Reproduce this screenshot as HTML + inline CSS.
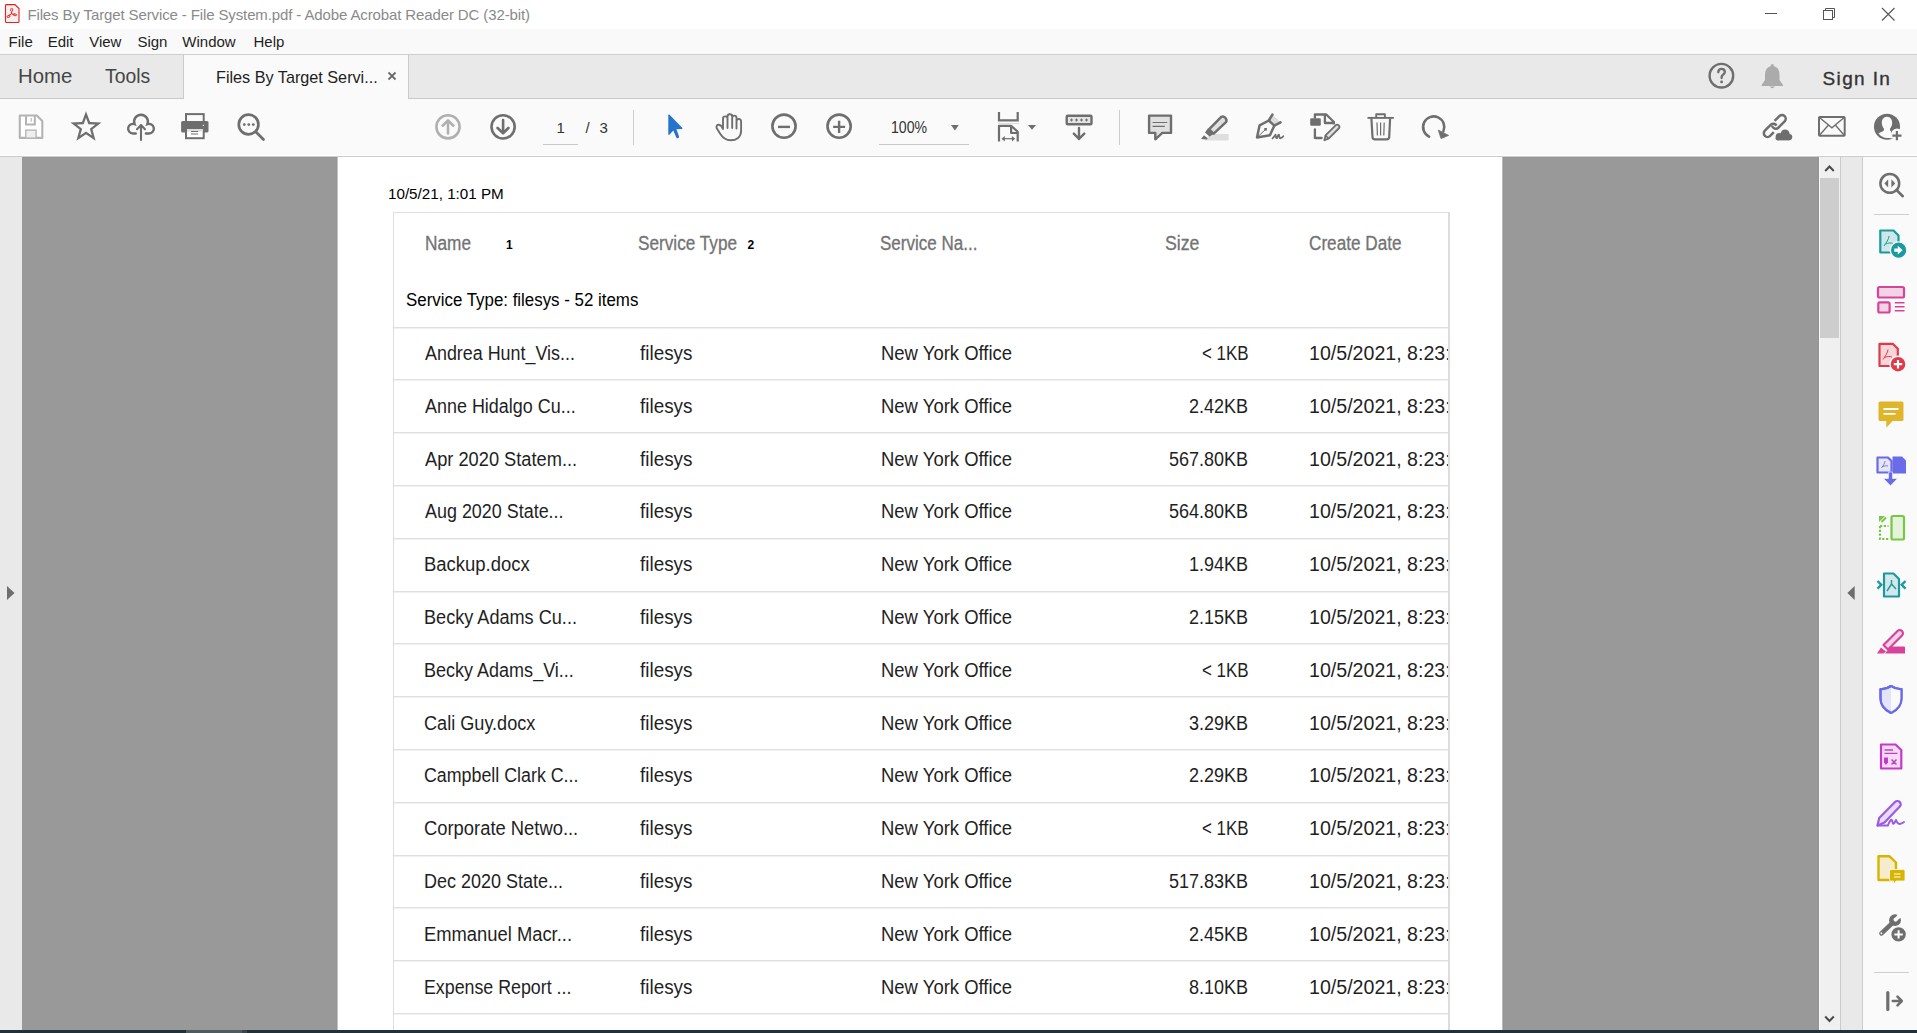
<!DOCTYPE html>
<html><head><meta charset="utf-8"><title>Acrobat</title>
<style>
html,body{margin:0;padding:0;width:1917px;height:1033px;overflow:hidden;background:#fff;}
body{position:relative;font-family:"Liberation Sans", sans-serif;}
.t{position:absolute;white-space:nowrap;}
.r{position:absolute;}
.i{position:absolute;overflow:visible;}
</style></head><body>
<div class="r" style="left:0px;top:0px;width:1917px;height:29px;background:#ffffff;"></div>
<div class="r" style="left:0px;top:29px;width:1917px;height:25px;background:#f9f9f9;"></div>
<div class="r" style="left:0px;top:54px;width:1917px;height:1px;background:#cfcfcf;"></div>
<div class="r" style="left:0px;top:55px;width:1917px;height:43px;background:#e9e9e9;"></div>
<div class="r" style="left:0px;top:98px;width:1917px;height:1px;background:#c9c9c9;"></div>
<div class="r" style="left:0px;top:99px;width:1917px;height:57px;background:#fafafa;"></div>
<div class="r" style="left:0px;top:155px;width:1917px;height:1px;background:#ffffff;"></div>
<div class="r" style="left:0px;top:156px;width:1917px;height:1px;background:#cdcdcd;"></div>
<div class="r" style="left:183px;top:55px;width:226px;height:44px;background:#fafafa;border-left:1px solid #c9c9c9;border-right:1px solid #c9c9c9;box-sizing:border-box;"></div>
<div class="r" style="left:0px;top:157px;width:22px;height:873px;background:#e9e9e9;"></div>
<div class="r" style="left:22px;top:157px;width:1797px;height:873px;background:#999999;"></div>
<div class="r" style="left:336px;top:157px;width:1px;height:873px;background:#959595;"></div>
<div class="r" style="left:337px;top:157px;width:1165px;height:873px;background:#ffffff;"></div>
<div class="r" style="left:337px;top:157px;width:1px;height:873px;background:#c6c6c6;"></div>
<div class="r" style="left:1502px;top:157px;width:1px;height:873px;background:#bdbdbd;"></div>
<div class="r" style="left:1503px;top:157px;width:1px;height:873px;background:#959595;"></div>
<div class="r" style="left:1818px;top:157px;width:1px;height:873px;background:#939393;"></div>
<div class="r" style="left:1819px;top:157px;width:1px;height:873px;background:#fafafa;"></div>
<div class="r" style="left:1820px;top:157px;width:20px;height:873px;background:#f0f0f0;"></div>
<div class="r" style="left:1820px;top:178px;width:19px;height:160px;background:#cdcdcd;"></div>
<div class="r" style="left:1840px;top:157px;width:1px;height:873px;background:#cbcbcb;"></div>
<div class="r" style="left:1841px;top:157px;width:21px;height:873px;background:#e9e9e9;"></div>
<div class="r" style="left:1862px;top:157px;width:1px;height:873px;background:#cbcbcb;"></div>
<div class="r" style="left:1863px;top:157px;width:54px;height:873px;background:#fafafa;"></div>
<div class="r" style="left:0px;top:1030px;width:1917px;height:3px;background:#1d3136;"></div>
<div class="r" style="left:186px;top:1030px;width:56px;height:3px;background:#4b5b5f;"></div>
<div class="r" style="left:242px;top:1030px;width:5px;height:3px;background:#3b4649;"></div>
<div class="t " style="left:27.40px;top:7.30px;font-size:15px;line-height:15px;color:#8a8a8a;letter-spacing:-0.12px;font-weight:normal;">Files By Target Service - File System.pdf - Adobe Acrobat Reader DC (32-bit)</div>
<div class="t " style="left:8.60px;top:33.90px;font-size:15px;line-height:15px;color:#1e1e1e;letter-spacing:0px;font-weight:normal;">File</div>
<div class="t " style="left:47.70px;top:33.90px;font-size:15px;line-height:15px;color:#1e1e1e;letter-spacing:0px;font-weight:normal;">Edit</div>
<div class="t " style="left:89.20px;top:33.90px;font-size:15px;line-height:15px;color:#1e1e1e;letter-spacing:0px;font-weight:normal;">View</div>
<div class="t " style="left:137.40px;top:33.90px;font-size:15px;line-height:15px;color:#1e1e1e;letter-spacing:0px;font-weight:normal;">Sign</div>
<div class="t " style="left:182.30px;top:33.90px;font-size:15px;line-height:15px;color:#1e1e1e;letter-spacing:0px;font-weight:normal;">Window</div>
<div class="t " style="left:253.50px;top:33.90px;font-size:15px;line-height:15px;color:#1e1e1e;letter-spacing:0px;font-weight:normal;">Help</div>
<div class="t " style="left:17.76px;top:66.69px;font-size:19.5px;line-height:19.5px;color:#454545;letter-spacing:0px;font-weight:normal;transform:scaleX(1.0440);transform-origin:0 0;">Home</div>
<div class="t " style="left:105.40px;top:66.69px;font-size:19.5px;line-height:19.5px;color:#454545;letter-spacing:0px;font-weight:normal;transform:scaleX(0.9911);transform-origin:0 0;">Tools</div>
<div class="t " style="left:215.75px;top:69.21px;font-size:17px;line-height:17px;color:#1e1e1e;letter-spacing:0px;font-weight:normal;transform:scaleX(0.9527);transform-origin:0 0;">Files By Target Servi...</div>
<div class="t " style="left:1822.60px;top:68.52px;font-size:19px;line-height:19px;color:#333333;letter-spacing:1.35px;font-weight:normal;-webkit-text-stroke:0.35px #333;">Sign In</div>
<div class="t " style="left:556.50px;top:120.00px;font-size:15px;line-height:15px;color:#333333;letter-spacing:0px;font-weight:normal;">1</div>
<div class="t " style="left:585.50px;top:120.00px;font-size:15px;line-height:15px;color:#333333;letter-spacing:0px;font-weight:normal;">/</div>
<div class="t " style="left:599.50px;top:120.00px;font-size:15px;line-height:15px;color:#333333;letter-spacing:0px;font-weight:normal;">3</div>
<div class="t " style="left:890.82px;top:119.66px;font-size:16px;line-height:16px;color:#333333;letter-spacing:0px;font-weight:normal;transform:scaleX(0.8825);transform-origin:0 0;">100%</div>
<div class="t " style="left:388.32px;top:186.28px;font-size:15.5px;line-height:15.5px;color:#000;letter-spacing:0px;font-weight:normal;transform:scaleX(0.9802);transform-origin:0 0;">10/5/21, 1:01 PM</div>
<div class="r" style="left:393px;top:212px;width:1057px;height:1px;background:#dedede;"></div>
<div class="r" style="left:393px;top:212px;width:1px;height:818px;background:#dedede;"></div>
<div class="r" style="left:1448px;top:212px;width:2px;height:818px;background:#dcdcdc;"></div>
<div class="t " style="left:425.02px;top:234.49px;font-size:19.5px;line-height:19.5px;color:#737373;letter-spacing:0px;font-weight:normal;transform:scaleX(0.8840);transform-origin:0 0;-webkit-text-stroke:0.3px #737373;">Name</div>
<div class="t " style="left:506.00px;top:238.64px;font-size:12px;line-height:12px;color:#000;letter-spacing:0px;font-weight:bold;">1</div>
<div class="t " style="left:638.12px;top:234.39px;font-size:19.5px;line-height:19.5px;color:#737373;letter-spacing:0px;font-weight:normal;transform:scaleX(0.8811);transform-origin:0 0;-webkit-text-stroke:0.3px #737373;">Service Type</div>
<div class="t " style="left:747.40px;top:238.74px;font-size:12px;line-height:12px;color:#000;letter-spacing:0px;font-weight:bold;">2</div>
<div class="t " style="left:880.43px;top:234.39px;font-size:19.5px;line-height:19.5px;color:#737373;letter-spacing:0px;font-weight:normal;transform:scaleX(0.8734);transform-origin:0 0;-webkit-text-stroke:0.3px #737373;">Service Na...</div>
<div class="t " style="left:1165.39px;top:234.39px;font-size:19.5px;line-height:19.5px;color:#737373;letter-spacing:0px;font-weight:normal;transform:scaleX(0.9083);transform-origin:0 0;-webkit-text-stroke:0.3px #737373;">Size</div>
<div class="t " style="left:1308.52px;top:234.39px;font-size:19.5px;line-height:19.5px;color:#737373;letter-spacing:0px;font-weight:normal;transform:scaleX(0.8796);transform-origin:0 0;-webkit-text-stroke:0.3px #737373;">Create Date</div>
<div class="t " style="left:405.54px;top:291.79px;font-size:17.5px;line-height:17.5px;color:#000;letter-spacing:0px;font-weight:normal;transform:scaleX(0.9646);transform-origin:0 0;">Service Type: filesys - 52 items</div>
<div class="r" style="left:394px;top:327px;width:1054px;height:1px;background:#e0e0e0;"></div>
<div class="r" style="left:394px;top:328px;width:1054px;height:1px;background:#f1f1f1;"></div>
<div class="r" style="left:394px;top:379px;width:1054px;height:1px;background:#e0e0e0;"></div>
<div class="r" style="left:394px;top:380px;width:1054px;height:1px;background:#f1f1f1;"></div>
<div class="r" style="left:394px;top:432px;width:1054px;height:1px;background:#e0e0e0;"></div>
<div class="r" style="left:394px;top:433px;width:1054px;height:1px;background:#f1f1f1;"></div>
<div class="r" style="left:394px;top:485px;width:1054px;height:1px;background:#e0e0e0;"></div>
<div class="r" style="left:394px;top:486px;width:1054px;height:1px;background:#f1f1f1;"></div>
<div class="r" style="left:394px;top:538px;width:1054px;height:1px;background:#e0e0e0;"></div>
<div class="r" style="left:394px;top:539px;width:1054px;height:1px;background:#f1f1f1;"></div>
<div class="r" style="left:394px;top:591px;width:1054px;height:1px;background:#e0e0e0;"></div>
<div class="r" style="left:394px;top:592px;width:1054px;height:1px;background:#f1f1f1;"></div>
<div class="r" style="left:394px;top:643px;width:1054px;height:1px;background:#e0e0e0;"></div>
<div class="r" style="left:394px;top:644px;width:1054px;height:1px;background:#f1f1f1;"></div>
<div class="r" style="left:394px;top:696px;width:1054px;height:1px;background:#e0e0e0;"></div>
<div class="r" style="left:394px;top:697px;width:1054px;height:1px;background:#f1f1f1;"></div>
<div class="r" style="left:394px;top:749px;width:1054px;height:1px;background:#e0e0e0;"></div>
<div class="r" style="left:394px;top:750px;width:1054px;height:1px;background:#f1f1f1;"></div>
<div class="r" style="left:394px;top:802px;width:1054px;height:1px;background:#e0e0e0;"></div>
<div class="r" style="left:394px;top:803px;width:1054px;height:1px;background:#f1f1f1;"></div>
<div class="r" style="left:394px;top:855px;width:1054px;height:1px;background:#e0e0e0;"></div>
<div class="r" style="left:394px;top:856px;width:1054px;height:1px;background:#f1f1f1;"></div>
<div class="r" style="left:394px;top:907px;width:1054px;height:1px;background:#e0e0e0;"></div>
<div class="r" style="left:394px;top:908px;width:1054px;height:1px;background:#f1f1f1;"></div>
<div class="r" style="left:394px;top:960px;width:1054px;height:1px;background:#e0e0e0;"></div>
<div class="r" style="left:394px;top:961px;width:1054px;height:1px;background:#f1f1f1;"></div>
<div class="r" style="left:394px;top:1013px;width:1054px;height:1px;background:#e0e0e0;"></div>
<div class="r" style="left:394px;top:1014px;width:1054px;height:1px;background:#f1f1f1;"></div>
<div class="t " style="left:424.70px;top:344.09px;font-size:19.5px;line-height:19.5px;color:#1f1f1f;letter-spacing:0px;font-weight:normal;transform:scaleX(0.9179);transform-origin:0 0;">Andrea Hunt_Vis...</div>
<div class="t " style="left:639.50px;top:344.09px;font-size:19.5px;line-height:19.5px;color:#1f1f1f;letter-spacing:0px;font-weight:normal;transform:scaleX(0.9679);transform-origin:0 0;">filesys</div>
<div class="t " style="left:881.15px;top:344.09px;font-size:19.5px;line-height:19.5px;color:#1f1f1f;letter-spacing:0px;font-weight:normal;transform:scaleX(0.9474);transform-origin:0 0;">New York Office</div>
<div class="t " style="left:1201.63px;top:344.09px;font-size:19.5px;line-height:19.5px;color:#1f1f1f;letter-spacing:0px;font-weight:normal;transform:scaleX(0.8698);transform-origin:0 0;">&lt; 1KB</div>
<div class="t" style="left:1309px;top:344.09px;width:139px;overflow:hidden;white-space:nowrap;"><div style="font-size:19.5px;line-height:19.5px;color:#1f1f1f;transform:scaleX(1.005);transform-origin:0 0;">10/5/2021, 8:23:02 AM</div></div>
<div class="t " style="left:424.70px;top:396.89px;font-size:19.5px;line-height:19.5px;color:#1f1f1f;letter-spacing:0px;font-weight:normal;transform:scaleX(0.9204);transform-origin:0 0;">Anne Hidalgo Cu...</div>
<div class="t " style="left:639.50px;top:396.89px;font-size:19.5px;line-height:19.5px;color:#1f1f1f;letter-spacing:0px;font-weight:normal;transform:scaleX(0.9679);transform-origin:0 0;">filesys</div>
<div class="t " style="left:881.15px;top:396.89px;font-size:19.5px;line-height:19.5px;color:#1f1f1f;letter-spacing:0px;font-weight:normal;transform:scaleX(0.9474);transform-origin:0 0;">New York Office</div>
<div class="t " style="left:1189.48px;top:396.89px;font-size:19.5px;line-height:19.5px;color:#1f1f1f;letter-spacing:0px;font-weight:normal;transform:scaleX(0.9238);transform-origin:0 0;">2.42KB</div>
<div class="t" style="left:1309px;top:396.89px;width:139px;overflow:hidden;white-space:nowrap;"><div style="font-size:19.5px;line-height:19.5px;color:#1f1f1f;transform:scaleX(1.005);transform-origin:0 0;">10/5/2021, 8:23:02 AM</div></div>
<div class="t " style="left:424.70px;top:449.69px;font-size:19.5px;line-height:19.5px;color:#1f1f1f;letter-spacing:0px;font-weight:normal;transform:scaleX(0.9354);transform-origin:0 0;">Apr 2020 Statem...</div>
<div class="t " style="left:639.50px;top:449.69px;font-size:19.5px;line-height:19.5px;color:#1f1f1f;letter-spacing:0px;font-weight:normal;transform:scaleX(0.9679);transform-origin:0 0;">filesys</div>
<div class="t " style="left:881.15px;top:449.69px;font-size:19.5px;line-height:19.5px;color:#1f1f1f;letter-spacing:0px;font-weight:normal;transform:scaleX(0.9474);transform-origin:0 0;">New York Office</div>
<div class="t " style="left:1169.28px;top:449.69px;font-size:19.5px;line-height:19.5px;color:#1f1f1f;letter-spacing:0px;font-weight:normal;transform:scaleX(0.9224);transform-origin:0 0;">567.80KB</div>
<div class="t" style="left:1309px;top:449.69px;width:139px;overflow:hidden;white-space:nowrap;"><div style="font-size:19.5px;line-height:19.5px;color:#1f1f1f;transform:scaleX(1.005);transform-origin:0 0;">10/5/2021, 8:23:02 AM</div></div>
<div class="t " style="left:424.70px;top:502.49px;font-size:19.5px;line-height:19.5px;color:#1f1f1f;letter-spacing:0px;font-weight:normal;transform:scaleX(0.9195);transform-origin:0 0;">Aug 2020 State...</div>
<div class="t " style="left:639.50px;top:502.49px;font-size:19.5px;line-height:19.5px;color:#1f1f1f;letter-spacing:0px;font-weight:normal;transform:scaleX(0.9679);transform-origin:0 0;">filesys</div>
<div class="t " style="left:881.15px;top:502.49px;font-size:19.5px;line-height:19.5px;color:#1f1f1f;letter-spacing:0px;font-weight:normal;transform:scaleX(0.9474);transform-origin:0 0;">New York Office</div>
<div class="t " style="left:1169.28px;top:502.49px;font-size:19.5px;line-height:19.5px;color:#1f1f1f;letter-spacing:0px;font-weight:normal;transform:scaleX(0.9224);transform-origin:0 0;">564.80KB</div>
<div class="t" style="left:1309px;top:502.49px;width:139px;overflow:hidden;white-space:nowrap;"><div style="font-size:19.5px;line-height:19.5px;color:#1f1f1f;transform:scaleX(1.005);transform-origin:0 0;">10/5/2021, 8:23:02 AM</div></div>
<div class="t " style="left:423.75px;top:555.29px;font-size:19.5px;line-height:19.5px;color:#1f1f1f;letter-spacing:0px;font-weight:normal;transform:scaleX(0.9468);transform-origin:0 0;">Backup.docx</div>
<div class="t " style="left:639.50px;top:555.29px;font-size:19.5px;line-height:19.5px;color:#1f1f1f;letter-spacing:0px;font-weight:normal;transform:scaleX(0.9679);transform-origin:0 0;">filesys</div>
<div class="t " style="left:881.15px;top:555.29px;font-size:19.5px;line-height:19.5px;color:#1f1f1f;letter-spacing:0px;font-weight:normal;transform:scaleX(0.9474);transform-origin:0 0;">New York Office</div>
<div class="t " style="left:1189.48px;top:555.29px;font-size:19.5px;line-height:19.5px;color:#1f1f1f;letter-spacing:0px;font-weight:normal;transform:scaleX(0.9238);transform-origin:0 0;">1.94KB</div>
<div class="t" style="left:1309px;top:555.29px;width:139px;overflow:hidden;white-space:nowrap;"><div style="font-size:19.5px;line-height:19.5px;color:#1f1f1f;transform:scaleX(1.005);transform-origin:0 0;">10/5/2021, 8:23:02 AM</div></div>
<div class="t " style="left:423.77px;top:608.09px;font-size:19.5px;line-height:19.5px;color:#1f1f1f;letter-spacing:0px;font-weight:normal;transform:scaleX(0.9284);transform-origin:0 0;">Becky Adams Cu...</div>
<div class="t " style="left:639.50px;top:608.09px;font-size:19.5px;line-height:19.5px;color:#1f1f1f;letter-spacing:0px;font-weight:normal;transform:scaleX(0.9679);transform-origin:0 0;">filesys</div>
<div class="t " style="left:881.15px;top:608.09px;font-size:19.5px;line-height:19.5px;color:#1f1f1f;letter-spacing:0px;font-weight:normal;transform:scaleX(0.9474);transform-origin:0 0;">New York Office</div>
<div class="t " style="left:1189.48px;top:608.09px;font-size:19.5px;line-height:19.5px;color:#1f1f1f;letter-spacing:0px;font-weight:normal;transform:scaleX(0.9238);transform-origin:0 0;">2.15KB</div>
<div class="t" style="left:1309px;top:608.09px;width:139px;overflow:hidden;white-space:nowrap;"><div style="font-size:19.5px;line-height:19.5px;color:#1f1f1f;transform:scaleX(1.005);transform-origin:0 0;">10/5/2021, 8:23:02 AM</div></div>
<div class="t " style="left:423.78px;top:660.89px;font-size:19.5px;line-height:19.5px;color:#1f1f1f;letter-spacing:0px;font-weight:normal;transform:scaleX(0.9238);transform-origin:0 0;">Becky Adams_Vi...</div>
<div class="t " style="left:639.50px;top:660.89px;font-size:19.5px;line-height:19.5px;color:#1f1f1f;letter-spacing:0px;font-weight:normal;transform:scaleX(0.9679);transform-origin:0 0;">filesys</div>
<div class="t " style="left:881.15px;top:660.89px;font-size:19.5px;line-height:19.5px;color:#1f1f1f;letter-spacing:0px;font-weight:normal;transform:scaleX(0.9474);transform-origin:0 0;">New York Office</div>
<div class="t " style="left:1201.63px;top:660.89px;font-size:19.5px;line-height:19.5px;color:#1f1f1f;letter-spacing:0px;font-weight:normal;transform:scaleX(0.8698);transform-origin:0 0;">&lt; 1KB</div>
<div class="t" style="left:1309px;top:660.89px;width:139px;overflow:hidden;white-space:nowrap;"><div style="font-size:19.5px;line-height:19.5px;color:#1f1f1f;transform:scaleX(1.005);transform-origin:0 0;">10/5/2021, 8:23:02 AM</div></div>
<div class="t " style="left:423.77px;top:713.69px;font-size:19.5px;line-height:19.5px;color:#1f1f1f;letter-spacing:0px;font-weight:normal;transform:scaleX(0.9286);transform-origin:0 0;">Cali Guy.docx</div>
<div class="t " style="left:639.50px;top:713.69px;font-size:19.5px;line-height:19.5px;color:#1f1f1f;letter-spacing:0px;font-weight:normal;transform:scaleX(0.9679);transform-origin:0 0;">filesys</div>
<div class="t " style="left:881.15px;top:713.69px;font-size:19.5px;line-height:19.5px;color:#1f1f1f;letter-spacing:0px;font-weight:normal;transform:scaleX(0.9474);transform-origin:0 0;">New York Office</div>
<div class="t " style="left:1189.48px;top:713.69px;font-size:19.5px;line-height:19.5px;color:#1f1f1f;letter-spacing:0px;font-weight:normal;transform:scaleX(0.9238);transform-origin:0 0;">3.29KB</div>
<div class="t" style="left:1309px;top:713.69px;width:139px;overflow:hidden;white-space:nowrap;"><div style="font-size:19.5px;line-height:19.5px;color:#1f1f1f;transform:scaleX(1.005);transform-origin:0 0;">10/5/2021, 8:23:02 AM</div></div>
<div class="t " style="left:423.79px;top:766.49px;font-size:19.5px;line-height:19.5px;color:#1f1f1f;letter-spacing:0px;font-weight:normal;transform:scaleX(0.9138);transform-origin:0 0;">Campbell Clark C...</div>
<div class="t " style="left:639.50px;top:766.49px;font-size:19.5px;line-height:19.5px;color:#1f1f1f;letter-spacing:0px;font-weight:normal;transform:scaleX(0.9679);transform-origin:0 0;">filesys</div>
<div class="t " style="left:881.15px;top:766.49px;font-size:19.5px;line-height:19.5px;color:#1f1f1f;letter-spacing:0px;font-weight:normal;transform:scaleX(0.9474);transform-origin:0 0;">New York Office</div>
<div class="t " style="left:1189.48px;top:766.49px;font-size:19.5px;line-height:19.5px;color:#1f1f1f;letter-spacing:0px;font-weight:normal;transform:scaleX(0.9238);transform-origin:0 0;">2.29KB</div>
<div class="t" style="left:1309px;top:766.49px;width:139px;overflow:hidden;white-space:nowrap;"><div style="font-size:19.5px;line-height:19.5px;color:#1f1f1f;transform:scaleX(1.005);transform-origin:0 0;">10/5/2021, 8:23:02 AM</div></div>
<div class="t " style="left:423.76px;top:819.29px;font-size:19.5px;line-height:19.5px;color:#1f1f1f;letter-spacing:0px;font-weight:normal;transform:scaleX(0.9422);transform-origin:0 0;">Corporate Netwo...</div>
<div class="t " style="left:639.50px;top:819.29px;font-size:19.5px;line-height:19.5px;color:#1f1f1f;letter-spacing:0px;font-weight:normal;transform:scaleX(0.9679);transform-origin:0 0;">filesys</div>
<div class="t " style="left:881.15px;top:819.29px;font-size:19.5px;line-height:19.5px;color:#1f1f1f;letter-spacing:0px;font-weight:normal;transform:scaleX(0.9474);transform-origin:0 0;">New York Office</div>
<div class="t " style="left:1201.63px;top:819.29px;font-size:19.5px;line-height:19.5px;color:#1f1f1f;letter-spacing:0px;font-weight:normal;transform:scaleX(0.8698);transform-origin:0 0;">&lt; 1KB</div>
<div class="t" style="left:1309px;top:819.29px;width:139px;overflow:hidden;white-space:nowrap;"><div style="font-size:19.5px;line-height:19.5px;color:#1f1f1f;transform:scaleX(1.005);transform-origin:0 0;">10/5/2021, 8:23:02 AM</div></div>
<div class="t " style="left:423.78px;top:872.09px;font-size:19.5px;line-height:19.5px;color:#1f1f1f;letter-spacing:0px;font-weight:normal;transform:scaleX(0.9230);transform-origin:0 0;">Dec 2020 State...</div>
<div class="t " style="left:639.50px;top:872.09px;font-size:19.5px;line-height:19.5px;color:#1f1f1f;letter-spacing:0px;font-weight:normal;transform:scaleX(0.9679);transform-origin:0 0;">filesys</div>
<div class="t " style="left:881.15px;top:872.09px;font-size:19.5px;line-height:19.5px;color:#1f1f1f;letter-spacing:0px;font-weight:normal;transform:scaleX(0.9474);transform-origin:0 0;">New York Office</div>
<div class="t " style="left:1169.28px;top:872.09px;font-size:19.5px;line-height:19.5px;color:#1f1f1f;letter-spacing:0px;font-weight:normal;transform:scaleX(0.9224);transform-origin:0 0;">517.83KB</div>
<div class="t" style="left:1309px;top:872.09px;width:139px;overflow:hidden;white-space:nowrap;"><div style="font-size:19.5px;line-height:19.5px;color:#1f1f1f;transform:scaleX(1.005);transform-origin:0 0;">10/5/2021, 8:23:02 AM</div></div>
<div class="t " style="left:423.76px;top:924.89px;font-size:19.5px;line-height:19.5px;color:#1f1f1f;letter-spacing:0px;font-weight:normal;transform:scaleX(0.9419);transform-origin:0 0;">Emmanuel Macr...</div>
<div class="t " style="left:639.50px;top:924.89px;font-size:19.5px;line-height:19.5px;color:#1f1f1f;letter-spacing:0px;font-weight:normal;transform:scaleX(0.9679);transform-origin:0 0;">filesys</div>
<div class="t " style="left:881.15px;top:924.89px;font-size:19.5px;line-height:19.5px;color:#1f1f1f;letter-spacing:0px;font-weight:normal;transform:scaleX(0.9474);transform-origin:0 0;">New York Office</div>
<div class="t " style="left:1189.48px;top:924.89px;font-size:19.5px;line-height:19.5px;color:#1f1f1f;letter-spacing:0px;font-weight:normal;transform:scaleX(0.9238);transform-origin:0 0;">2.45KB</div>
<div class="t" style="left:1309px;top:924.89px;width:139px;overflow:hidden;white-space:nowrap;"><div style="font-size:19.5px;line-height:19.5px;color:#1f1f1f;transform:scaleX(1.005);transform-origin:0 0;">10/5/2021, 8:23:02 AM</div></div>
<div class="t " style="left:423.79px;top:977.69px;font-size:19.5px;line-height:19.5px;color:#1f1f1f;letter-spacing:0px;font-weight:normal;transform:scaleX(0.9126);transform-origin:0 0;">Expense Report ...</div>
<div class="t " style="left:639.50px;top:977.69px;font-size:19.5px;line-height:19.5px;color:#1f1f1f;letter-spacing:0px;font-weight:normal;transform:scaleX(0.9679);transform-origin:0 0;">filesys</div>
<div class="t " style="left:881.15px;top:977.69px;font-size:19.5px;line-height:19.5px;color:#1f1f1f;letter-spacing:0px;font-weight:normal;transform:scaleX(0.9474);transform-origin:0 0;">New York Office</div>
<div class="t " style="left:1189.48px;top:977.69px;font-size:19.5px;line-height:19.5px;color:#1f1f1f;letter-spacing:0px;font-weight:normal;transform:scaleX(0.9238);transform-origin:0 0;">8.10KB</div>
<div class="t" style="left:1309px;top:977.69px;width:139px;overflow:hidden;white-space:nowrap;"><div style="font-size:19.5px;line-height:19.5px;color:#1f1f1f;transform:scaleX(1.005);transform-origin:0 0;">10/5/2021, 8:23:02 AM</div></div>
<svg class="i" style="left:0;top:0" width="1917" height="1033" viewBox="0 0 1917 1033"><path d="M5.5,4.6 H15 L19,8.6 V21.5 Q19,22.5 18,22.5 H6.5 Q5.5,22.5 5.5,21.5 V5.6 Q5.5,4.6 6.5,4.6 Z" fill="#f1f1f1" stroke="#f41a1a" stroke-width="1.1"/>
<ellipse cx="11.7" cy="9.9" rx="1.1" ry="1.6" fill="none" stroke="#f01c1c" stroke-width="0.9"/>
<path d="M11.7,11.5 L11.4,13.8 L8.2,15.8 M11.4,13.8 L14.6,14.4" fill="none" stroke="#f01c1c" stroke-width="1"/>
<ellipse cx="8.6" cy="16.4" rx="1.7" ry="0.9" transform="rotate(-20 8.6 16.4)" fill="none" stroke="#f01c1c" stroke-width="0.9"/>
<ellipse cx="14.9" cy="14.8" rx="1.8" ry="0.9" transform="rotate(8 14.9 14.8)" fill="none" stroke="#f01c1c" stroke-width="0.9"/>
<path d="M1765,13.5 H1777" stroke="#555" stroke-width="1"/>
<rect x="1823.5" y="10.5" width="9" height="9" fill="none" stroke="#555" stroke-width="1"/>
<path d="M1825.5,10.5 V8.5 H1834.5 V17.5 H1832.5" fill="none" stroke="#555" stroke-width="1"/>
<path d="M1882,8 L1894.5,20.5 M1894.5,8 L1882,20.5" stroke="#555" stroke-width="1.1"/>
<path d="M388.5,72.5 L395.5,79.5 M395.5,72.5 L388.5,79.5" stroke="#6a6a6a" stroke-width="1.8"/>
<circle cx="1721.4" cy="75.7" r="11.8" fill="none" stroke="#6e6e6e" stroke-width="2.4"/>
<path d="M1718.3,72.3 Q1718.3,68.9 1721.6,68.9 Q1724.8,68.9 1724.8,71.9 Q1724.8,73.7 1723,74.8 Q1721.6,75.7 1721.6,77.3 V78" fill="none" stroke="#6e6e6e" stroke-width="2.3" stroke-linecap="round"/>
<circle cx="1721.6" cy="81.9" r="1.45" fill="#6e6e6e"/>
<path d="M1772.3,64 Q1773.8,64 1773.8,66 Q1779.5,67.5 1779.5,75 V80 L1783,85 V86 H1761.6 V85 L1765,80 V75 Q1765,67.5 1770.8,66 Q1770.8,64 1772.3,64 Z" fill="#ababab"/>
<path d="M1769.5,86.5 Q1772.3,90 1775,86.5 Z" fill="#ababab"/>
<path d="M19.8,115.5 H36.8 L42.3,121 V137.9 H19.8 Z" fill="#ffffff" stroke="#b3b3b3" stroke-width="2.1" stroke-linejoin="round"/>
<path d="M26,115.5 V124.6 H34.8 V115.5" fill="none" stroke="#b3b3b3" stroke-width="2"/>
<path d="M31.2,118 V121.8" stroke="#b3b3b3" stroke-width="1.1"/>
<rect x="25.8" y="130.1" width="10.3" height="8" fill="#eeeeee" stroke="#b3b3b3" stroke-width="1.3"/>
<path d="M86.00,111.20 L90.00,122.00 L101.50,122.46 L92.47,129.60 L95.58,140.69 L86.00,134.30 L76.42,140.69 L79.53,129.60 L70.50,122.46 L82.00,122.00 Z M86.00,117.68 L88.41,124.19 L95.34,124.47 L89.90,128.77 L91.77,135.44 L86.00,131.60 L80.23,135.44 L82.10,128.77 L76.66,124.47 L83.59,124.19 Z" fill="#6e6e6e" fill-rule="evenodd"/>
<path d="M135.8,133.5 H133 A4.8,4.8 0 1 1 134.6,124.2 A6.9,6.9 0 1 1 147.4,124.2 A4.8,4.8 0 1 1 149,133.5 H145.9" fill="none" stroke="#6e6e6e" stroke-width="2.4" stroke-linecap="round"/>
<path d="M141,125 V140 M137,129.2 L141,125 L145,129.2" fill="none" stroke="#6e6e6e" stroke-width="2.1" stroke-linecap="round" stroke-linejoin="round"/>
<rect x="186" y="114.1" width="17.7" height="9" fill="#fafafa" stroke="#6e6e6e" stroke-width="2"/>
<rect x="181.1" y="121" width="27.4" height="11.6" rx="1.6" fill="#6e6e6e"/>
<rect x="186" y="128" width="17.7" height="10.2" fill="#ffffff" stroke="#6e6e6e" stroke-width="2"/>
<rect x="187" y="129" width="15.7" height="2.5" fill="#dedede"/>
<path d="M191,131.5 H198.2 M191,134 H198.2" stroke="#6e6e6e" stroke-width="1"/>
<path d="M202.6,126 L203.4,124.2 L204.2,126 Z" fill="#fff"/>
<circle cx="248.6" cy="124.5" r="9.8" fill="none" stroke="#6e6e6e" stroke-width="2.7"/>
<path d="M256,132 L263.5,139.5" stroke="#6e6e6e" stroke-width="2.8" stroke-linecap="round"/>
<circle cx="244.3" cy="124.6" r="1.4" fill="#6e6e6e"/>
<circle cx="248.8" cy="124.6" r="1.4" fill="#6e6e6e"/>
<circle cx="253.3" cy="124.6" r="1.4" fill="#6e6e6e"/>
<circle cx="448" cy="126.8" r="11.6" fill="none" stroke="#b0b0b0" stroke-width="2.6"/>
<path d="M448,133.5 V120.6 M442.6,125.7 L448,120.4 L453.4,125.7" fill="none" stroke="#b0b0b0" stroke-width="2.6" stroke-linecap="round" stroke-linejoin="round"/>
<circle cx="503.1" cy="126.85" r="11.6" fill="none" stroke="#6e6e6e" stroke-width="2.6"/>
<path d="M503.1,120.1 V133 M497.6,128 L503.1,133.2 L508.4,128" fill="none" stroke="#6e6e6e" stroke-width="2.6" stroke-linecap="round" stroke-linejoin="round"/>
<rect x="543" y="144" width="35" height="1" fill="#c8c8c8"/>
<rect x="633" y="110" width="1" height="35" fill="#cccccc"/>
<rect x="879" y="144" width="90" height="1" fill="#c8c8c8"/>
<rect x="1119" y="110" width="1" height="35" fill="#cccccc"/>
<path d="M668.3,115 Q668.3,114 669.3,114.6 L682.2,127.8 Q683,128.9 681.8,129 L676.4,129.3 L679,136.2 Q679.3,137.6 678,138.2 Q676.8,138.6 676.3,137.4 L673.3,130.6 L669.6,134.6 Q668.3,135.6 668.3,134.2 Z" fill="#2473cc"/>
<path d="M723,129 V118.65 A2.25,2.25 0 0 1 727.5,118.65 V128 M727.5,119 V116.65 A2.35,2.35 0 0 1 732.2,116.65 V128 M732.2,117.75 A2.15,2.15 0 0 1 736.5,117.75 V128.5 M736.5,121.3 A2.3,2.3 0 0 1 741.1,121.3 V131 C741.1,137 736.5,140.3 730.5,140.3 C725.5,140.3 722.5,137.5 720,133.5 L716.8,128.3 C715.8,126.3 717,124.6 719,124.8 C720.8,125 722,126.5 723,129" fill="none" stroke="#6e6e6e" stroke-width="1.9" stroke-linecap="round" stroke-linejoin="round"/>
<circle cx="784" cy="126.2" r="11.6" fill="none" stroke="#6e6e6e" stroke-width="2.6"/>
<path d="M778,126.9 H790" stroke="#6e6e6e" stroke-width="2.4"/>
<circle cx="839.1" cy="126.2" r="11.6" fill="none" stroke="#6e6e6e" stroke-width="2.6"/>
<path d="M833.1,126.9 H845.1 M839.1,120.8 V133" stroke="#6e6e6e" stroke-width="2.4"/>
<path d="M951,125 H958.8 L954.9,130.5 Z" fill="#6e6e6e"/>
<path d="M1028,124.9 H1036 L1032,129.7 Z" fill="#6e6e6e"/>
<path d="M999,112 V120.4 H1017.7 V112" fill="none" stroke="#6e6e6e" stroke-width="2.2"/>
<rect x="998" y="123" width="21" height="1" fill="#dddddd"/>
<path d="M999,141.6 V125.8 H1011.1 L1017.7,131.8 V141.6 M1011.1,125.8 V133 H1017.7" fill="none" stroke="#6e6e6e" stroke-width="2.2" stroke-linejoin="round"/>
<path d="M1004,138.7 H1012.5" stroke="#6e6e6e" stroke-width="1.2"/>
<path d="M1001.5,138.7 L1004.8,136 V141.4 Z M1015.2,138.7 L1011.9,136 V141.4 Z" fill="#6e6e6e"/>
<rect x="1066.7" y="115.8" width="24.8" height="8.5" rx="1" fill="#e4e4e4" stroke="#6e6e6e" stroke-width="2.4"/>
<path d="M1071.5,118.2 L1072.9,120 L1071.5,121.8 L1070.1,120 Z" fill="#6e6e6e"/>
<path d="M1076.5,118.2 L1077.9,120 L1076.5,121.8 L1075.1,120 Z" fill="#6e6e6e"/>
<path d="M1081.5,118.2 L1082.9,120 L1081.5,121.8 L1080.1,120 Z" fill="#6e6e6e"/>
<path d="M1086.5,118.2 L1087.9,120 L1086.5,121.8 L1085.1,120 Z" fill="#6e6e6e"/>
<path d="M1079,128 V139 M1073.8,133.6 L1079,138.9 L1084.3,133.6" fill="none" stroke="#6e6e6e" stroke-width="2.4" stroke-linecap="round" stroke-linejoin="round"/>
<path d="M1149.1,115.6 H1171 V132.9 H1162.3 L1155.3,139.3 V132.9 H1149.1 Z" fill="#e0e0e0" stroke="#6e6e6e" stroke-width="2.4" stroke-linejoin="round"/>
<path d="M1152.6,122.5 H1167.2 M1152.6,126.4 H1164.8" stroke="#6e6e6e" stroke-width="1.1"/>
<path d="M1210,134 H1228.7 V140.6 H1204.5 Z" fill="#dedede"/>
<path d="M1209,129.3 L1221.3,116.9 A3.8,3.8 0 0 1 1226.2,121.8 L1213.7,133.6 Z" fill="#e0e0e0" stroke="#6e6e6e" stroke-width="2.5" stroke-linejoin="round"/>
<path d="M1205,132.5 L1207.8,128.6 L1214,133.75 L1209.6,136.5 Z" fill="#6e6e6e"/>
<path d="M1201,139 L1204,135.2 L1207.8,138.4 L1206.5,139.6 Z" fill="#6e6e6e"/>
<path d="M1272.4,114.4 L1280.5,122.3 L1274.3,125.7 L1268.8,120.5 Z" fill="#dcdcdc"/>
<path d="M1257,137.4 L1259.6,125.3 L1268.8,120.5 L1274.3,125.7 L1269.9,135.2 Z" fill="none" stroke="#6e6e6e" stroke-width="2.5" stroke-linejoin="round"/>
<path d="M1268.8,120.5 L1272.4,114.6 M1274.3,125.7 L1280.5,122.3" stroke="#6e6e6e" stroke-width="2.6" stroke-linecap="round"/>
<path d="M1257.5,137 L1265.5,129.5" stroke="#6e6e6e" stroke-width="1"/>
<rect x="1264.3" y="128" width="2.6" height="2.6" fill="#6e6e6e"/>
<path d="M1272.5,138.3 Q1274.5,136.5 1275.5,134.6 Q1275.8,138.4 1277,138.2 Q1278.2,134.2 1279,134.8 Q1279.3,138.5 1280.6,138.2 Q1282,137.8 1283.3,136.2" fill="none" stroke="#6e6e6e" stroke-width="1.8" stroke-linejoin="round" stroke-linecap="round"/>
<path d="M1314.9,118.5 V114.5 H1326.3 L1333.9,122 V124.5 M1324.9,115 V123 H1333.9" fill="none" stroke="#6e6e6e" stroke-width="2.3" stroke-linejoin="round"/>
<rect x="1310.2" y="118.3" width="10.6" height="7.4" rx="1.3" fill="#6e6e6e"/>
<path d="M1314.9,129.5 V138 H1321.6" fill="none" stroke="#6e6e6e" stroke-width="2.3" stroke-linecap="round" stroke-linejoin="round"/>
<path d="M1324.4,140.2 L1325.5,135.3 L1335.6,125.4 A1.9,1.9 0 0 1 1338.7,128.5 L1328.6,138.6 Z" fill="#e0e0e0" stroke="#6e6e6e" stroke-width="1.8" stroke-linejoin="round"/>
<path d="M1325.5,135.3 L1328.6,138.6" stroke="#6e6e6e" stroke-width="1.5"/>
<path d="M1367.5,117.9 H1393.8" stroke="#6e6e6e" stroke-width="1.9"/>
<path d="M1376.2,117.5 V114.2 H1384.9 V117.5" fill="none" stroke="#6e6e6e" stroke-width="1.9" stroke-linejoin="round"/>
<path d="M1371.4,118.5 L1372.5,137 Q1372.6,139.3 1375,139.3 H1386.7 Q1389.1,139.3 1389.2,137 L1390.1,118.5" fill="none" stroke="#6e6e6e" stroke-width="2.2"/>
<path d="M1377,122.6 L1377.4,135.4 M1380.6,122.6 V135.4 M1384.2,122.6 L1383.8,135.4" stroke="#6e6e6e" stroke-width="1.2"/>
<path d="M1429.1,136.6 A10.6,10.6 0 1 1 1443.4,131.3" fill="none" stroke="#6e6e6e" stroke-width="2.6" stroke-linecap="round"/>
<path d="M1438.3,130.1 L1448.6,135.4 L1441,138.5 Z" fill="#6e6e6e" stroke="#6e6e6e" stroke-width="0.8" stroke-linejoin="round"/>
<path d="M1774.6,120.96 L1779.38,116.18 A3.7,3.7 0 0 1 1784.62,121.42 L1778.42,127.62 A3.7,3.7 0 0 1 1772.1,125.6" fill="none" stroke="#6e6e6e" stroke-width="2.5"/>
<path d="M1773.8,132.24 L1770.12,135.92 A3.7,3.7 0 0 1 1764.88,130.68 L1770.88,124.68 A3.7,3.7 0 0 1 1776.5,125.6" fill="none" stroke="#6e6e6e" stroke-width="2.5"/>
<circle cx="1785.1" cy="133.9" r="5.8" fill="#fafafa"/>
<circle cx="1779.2" cy="136.6" r="4.8" fill="#fafafa"/>
<circle cx="1789.2" cy="137.1" r="4.4" fill="#fafafa"/>
<circle cx="1777.6" cy="138.3" r="3.4000000000000004" fill="#fafafa"/>
<rect x="1775" y="136" width="18.5" height="5.8" fill="#fafafa"/>
<circle cx="1785.1" cy="133.9" r="4.5" fill="#6e6e6e"/>
<circle cx="1779.2" cy="136.6" r="3.5" fill="#6e6e6e"/>
<circle cx="1789.2" cy="137.1" r="3.1" fill="#6e6e6e"/>
<circle cx="1777.6" cy="138.3" r="2.1" fill="#6e6e6e"/>
<rect x="1777.6" y="137" width="11.6" height="3.4" fill="#6e6e6e"/>
<rect x="1819" y="117" width="25.7" height="18.7" rx="0.8" fill="none" stroke="#6e6e6e" stroke-width="2"/>
<path d="M1819.5,117.5 L1831.9,127.8 L1844.2,117.5 M1819.5,135.2 L1828.5,125 M1844.2,135.2 L1835.3,125" fill="none" stroke="#6e6e6e" stroke-width="1.4"/>
<circle cx="1887" cy="126.75" r="13.05" fill="#6e6e6e"/>
<path d="M1887,116.7 C1883.3,116.7 1881.8,119.8 1881.8,122.8 C1881.8,125.5 1883,127.5 1884,128.8 Q1884.5,130.7 1882.5,131.5 Q1879.5,132.5 1878.6,133.6 C1880.8,136.5 1884,138.1 1887,138.1 C1889,138.1 1891,137.8 1891.5,137.2 L1891,131.5 Q1889.5,130.5 1890,128.8 C1891,127.5 1892.2,125.5 1892.2,122.8 C1892.2,119.8 1890.7,116.7 1887,116.7 Z" fill="#fafafa"/>
<path d="M1889.5,138 L1892,131 Q1894,128.5 1897,128.5 Q1899.5,128.5 1901,130 L1903,140 Z" fill="#fafafa"/>
<path d="M1896.9,130.3 V140.9 M1891.6,135.6 H1902.2" stroke="#fafafa" stroke-width="4.4"/>
<path d="M1896.9,131 V140.2 M1892.3,135.6 H1901.5" stroke="#6e6e6e" stroke-width="2.2"/><path d="M7,586 L14.5,593 L7,600 Z" fill="#6e6e6e"/>
<path d="M1854.7,586 L1847.3,593 L1854.7,600 Z" fill="#6e6e6e"/>
<path d="M1825.2,171 L1829.5,166.5 L1833.8,171" fill="none" stroke="#4a4a4a" stroke-width="2"/>
<path d="M1825.2,1016.5 L1829.5,1021 L1833.8,1016.5" fill="none" stroke="#4a4a4a" stroke-width="2"/>
<circle cx="1889.8" cy="183.4" r="9.4" fill="none" stroke="#6e6e6e" stroke-width="2.5"/>
<path d="M1896.5,190 L1902.8,196.2" stroke="#6e6e6e" stroke-width="2.6" stroke-linecap="round"/>
<path d="M1888.2,179.3 V187.5 L1884.4,183.4 Z M1891.4,179.3 V187.5 L1895.2,183.4 Z" fill="#6e6e6e"/>
<rect x="1874" y="214" width="35" height="1" fill="#cfcfcf"/>
<path d="M1880.3,230.5 H1893.5 L1898.5,235.5 V252.5 H1880.3 Z" fill="#cfe7e9" stroke="#1a9aa0" stroke-width="2.2" stroke-linejoin="round"/>
<path d="M1884,246 C1886,243 1889,239 1889,236 M1885.5,244 C1888,243 1891,242.5 1893,243.5" fill="none" stroke="#1a9aa0" stroke-width="1"/>
<circle cx="1898.6" cy="250.2" r="8.3" fill="#1a9aa0" stroke="#fafafa" stroke-width="1.4"/>
<path d="M1894.3,248.6 H1897.8 V245.8 L1902.6,250.2 L1897.8,254.6 V251.8 H1894.3 Z" fill="#fff"/>
<rect x="1878" y="287" width="26" height="10.5" rx="1.5" fill="#f3d3e6" stroke="#d9429a" stroke-width="2.2"/>
<rect x="1878.3" y="302.3" width="11.3" height="10.2" rx="1.5" fill="#f3d3e6" stroke="#d9429a" stroke-width="2.2"/>
<path d="M1894.8,302.8 H1904.5 M1894.8,306.8 H1904.5 M1894.8,310.8 H1904.5" stroke="#d9429a" stroke-width="1.4"/>
<path d="M1879.5,343.8 H1892.8 L1897.8,348.8 V366 H1879.5 Z" fill="#f6d6d9" stroke="#e0394a" stroke-width="2.2" stroke-linejoin="round"/>
<path d="M1883,359.5 C1885,356.5 1888,352.5 1888,349.5 M1884.5,357.5 C1887,356.5 1890,356 1892,357" fill="none" stroke="#e0394a" stroke-width="1"/>
<circle cx="1898" cy="364.2" r="8" fill="#e0394a" stroke="#fafafa" stroke-width="1.4"/>
<path d="M1898,360 V368.4 M1893.8,364.2 H1902.2" stroke="#fff" stroke-width="2.2"/>
<path d="M1880.2,401.5 H1902 Q1903.5,401.5 1903.5,403 V419.5 Q1903.5,421 1902,421 H1892.5 L1886.3,427.8 V421 H1880.2 Q1878.5,421 1878.5,419.5 V403 Q1878.5,401.5 1880.2,401.5 Z" fill="#dfb52a"/>
<path d="M1883.5,409 H1898.5 M1883.5,413.8 H1895.5" stroke="#fff" stroke-width="1.8"/>
<path d="M1892.5,456.5 H1902 L1906,460.5 V473.5 H1892.5 Z" fill="#6a6be8"/>
<path d="M1877.5,457.5 H1888 L1891.5,461 V472.5 H1877.5 Z" fill="#e6e6fb" stroke="#6a6be8" stroke-width="2.2" stroke-linejoin="round"/>
<path d="M1881.5,468 C1883,466 1885,463 1885,461 M1882.5,466.5 C1884.5,466 1886.5,465.5 1888,466" fill="none" stroke="#6a6be8" stroke-width="0.9"/>
<path d="M1888.5,472 V478.5 H1883.5 L1890.5,485.7 L1897.5,478.5 H1892.5 V472 Z" fill="#6a6be8" stroke="#fafafa" stroke-width="0.6"/>
<rect x="1891.5" y="516" width="12.5" height="23.5" rx="1.5" fill="#e5f3dc" stroke="#78c742" stroke-width="2.2"/>
<path d="M1880,526 V539 H1888.5 M1880,526 H1888.5" fill="none" stroke="#78c742" stroke-width="2.2" stroke-dasharray="2.2,1.6"/>
<path d="M1886,517.5 L1881.5,522" stroke="#78c742" stroke-width="2"/>
<path d="M1879,516 H1885 L1879,522 Z" fill="#78c742"/>
<path d="M1884,573.5 H1893.5 L1899,579 V596.5 H1884 Z" fill="#d4e8ea" stroke="#1a9aa0" stroke-width="2.2" stroke-linejoin="round"/>
<path d="M1877.5,581 L1881.3,584.8 L1877.5,588.6 M1905.5,581 L1901.7,584.8 L1905.5,588.6" fill="none" stroke="#1a9aa0" stroke-width="2.4"/>
<path d="M1887,591 L1891.5,584 L1896,589 M1891.5,584 V580" fill="none" stroke="#1a9aa0" stroke-width="1.4"/>
<path d="M1883.5,645 L1897.5,631 A3,3 0 0 1 1902,635.5 L1888,649.5 Z" fill="#f3d3e6" stroke="#d9429a" stroke-width="2.2" stroke-linejoin="round"/>
<path d="M1877,653.5 L1881,647.5 L1886,651.5 L1883.5,653.5 Z" fill="#d9429a"/>
<path d="M1890.5,646.5 H1904 Q1905,646.5 1905,647.5 V653.5 H1885 Z" fill="#d9429a"/>
<path d="M1891,686 Q1896,689.5 1901.5,689 V698.5 Q1901.5,708 1891,713 Q1880.5,708 1880.5,698.5 V689 Q1886,689.5 1891,686 Z" fill="#e3e3fb" stroke="#6a6be8" stroke-width="2.2" stroke-linejoin="round"/>
<path d="M1891,686 Q1896,689.5 1901.5,689 V698.5 Q1901.5,708 1891,713 Z" fill="#fafafa"/>
<path d="M1891,686 Q1896,689.5 1901.5,689 V698.5 Q1901.5,708 1891,713 Q1880.5,708 1880.5,698.5 V689 Q1886,689.5 1891,686 Z" fill="none" stroke="#6a6be8" stroke-width="2.2" stroke-linejoin="round"/>
<path d="M1881,744.5 H1895.5 L1901.3,750 V768.5 H1881 Z" fill="#f4dcf5" stroke="#c43bc9" stroke-width="2.2" stroke-linejoin="round"/>
<path d="M1884.5,750 H1893 M1884.5,753.3 H1897.5" stroke="#c43bc9" stroke-width="1.3"/>
<path d="M1884,757.5 H1888 V762.5 L1886,765 L1884,762.5 Z" fill="#c43bc9"/>
<path d="M1891.5,759.5 L1896.5,764.5 M1896.5,759.5 L1891.5,764.5" stroke="#c43bc9" stroke-width="1.5"/>
<path d="M1877.5,825.5 L1879.2,818 L1895,802 A3.2,3.2 0 0 1 1899.8,806.6 L1884.5,822.5 Z" fill="#e8dcf9" stroke="#9b5be2" stroke-width="2.2" stroke-linejoin="round"/>
<path d="M1877.5,825.5 H1888 M1888,825 C1890,820 1892,818 1892.5,822 C1893,826 1895,822 1896,820 C1897,823 1899,826 1904,822" fill="none" stroke="#9b5be2" stroke-width="2" stroke-linecap="round" stroke-linejoin="round"/>
<path d="M1878.5,856.3 H1889.5 L1896,862.5 V880 H1878.5 Z" fill="#f4eccb" stroke="#d8b400" stroke-width="2.4" stroke-linejoin="round"/>
<path d="M1891,869.5 H1903.5 Q1905,869.5 1905,871 V879.5 Q1905,881 1903.5,881 H1896 L1893.5,884.5 V881 H1891 Q1889.5,881 1889.5,879.5 V871 Q1889.5,869.5 1891,869.5 Z" fill="#d8b400" stroke="#fafafa" stroke-width="0.8"/>
<path d="M1894,874 H1900.5 M1894,877 H1900.5" stroke="#fff" stroke-width="1.2"/>
<path d="M1881.5,933.3 L1891.5,923.8" stroke="#6e6e6e" stroke-width="4.6" stroke-linecap="round"/>
<circle cx="1881.4" cy="933.2" r="1" fill="#fafafa"/>
<circle cx="1895" cy="920.2" r="5.9" fill="#6e6e6e"/>
<circle cx="1895.6" cy="919.6" r="2.1" fill="#fafafa"/>
<path d="M1894.6,918.6 L1898.6,913.6 L1901.8,916.8 L1896.8,920.8 Z" fill="#fafafa"/>
<circle cx="1898.6" cy="934.4" r="7.9" fill="#6e6e6e" stroke="#fafafa" stroke-width="1.4"/>
<path d="M1898.6,930.2 V938.6 M1894.4,934.4 H1902.8" stroke="#fff" stroke-width="2"/>
<rect x="1874" y="972" width="35" height="1" fill="#cfcfcf"/>
<path d="M1887.8,992.5 V1009.5" stroke="#6e6e6e" stroke-width="3.2" stroke-linecap="round"/>
<path d="M1892.8,1001 H1901.5 M1897.5,996.7 L1901.8,1001 L1897.5,1005.3" fill="none" stroke="#6e6e6e" stroke-width="2.6" stroke-linecap="round" stroke-linejoin="round"/></svg>
</body></html>
